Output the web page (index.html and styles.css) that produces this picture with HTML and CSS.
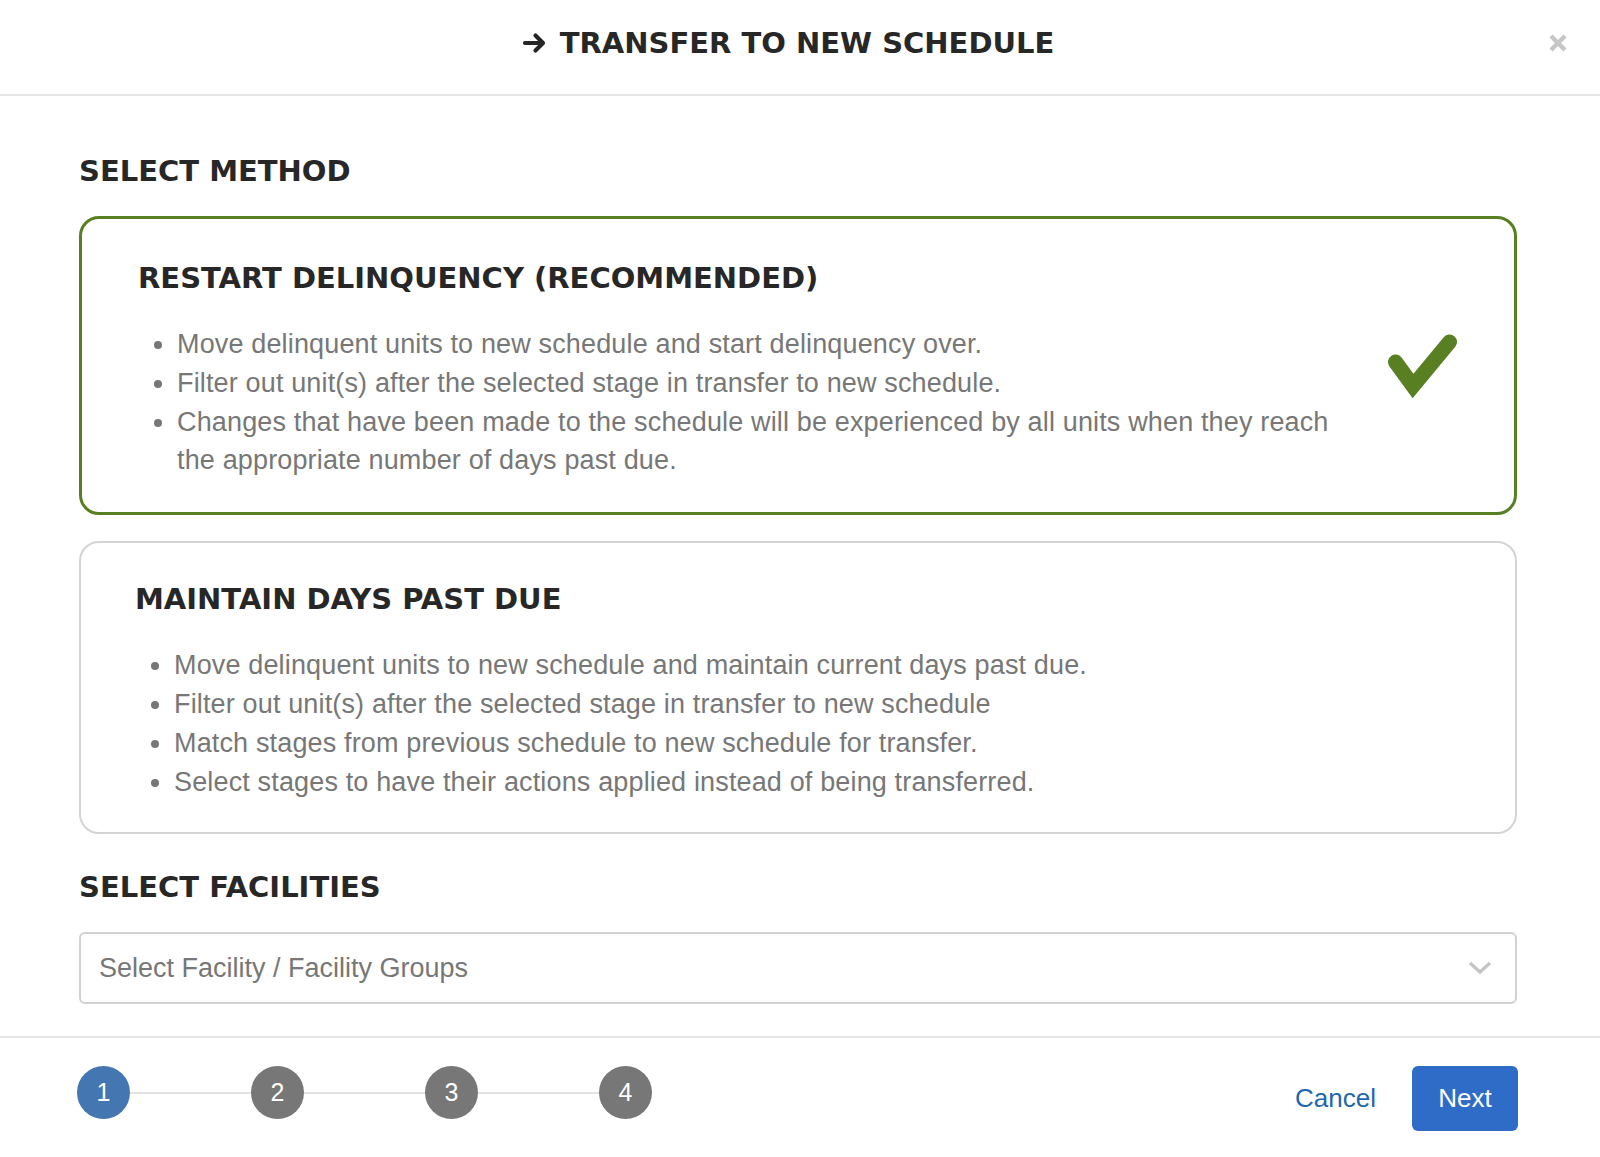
FILE: index.html
```html
<!DOCTYPE html>
<html>
<head>
<meta charset="utf-8">
<link rel="stylesheet" href="styles.css">
</head>
<body>
<div class="modal">
  <header class="modal-header">
    <h1 class="modal-title">
      <svg class="title-arrow" width="26" height="22" viewBox="0 0 26 22"><path d="M3 11 H21 M13.5 3.5 L21 11 L13.5 18.5" fill="none" stroke="#262626" stroke-width="4.2" stroke-linecap="round" stroke-linejoin="round"/></svg>
      <span>TRANSFER TO NEW SCHEDULE</span>
    </h1>
    <button class="close-btn" aria-label="Close">
      <svg width="20" height="20" viewBox="0 0 20 20"><path d="M3 3 L17 17 M17 3 L3 17" stroke="#c6c6c6" stroke-width="4.4" stroke-linecap="butt"/></svg>
    </button>
  </header>

  <main class="modal-body">
    <h2 class="section-title">SELECT METHOD</h2>

    <div class="method-card selected">
      <div class="method-content">
        <h3 class="method-title">RESTART DELINQUENCY (RECOMMENDED)</h3>
        <ul class="method-list">
          <li>Move delinquent units to new schedule and start delinquency over.</li>
          <li>Filter out unit(s) after the selected stage in transfer to new schedule.</li>
          <li>Changes that have been made to the schedule will be experienced by all units when they reach the appropriate number of days past due.</li>
        </ul>
      </div>
      <svg class="check" width="75" height="70" viewBox="0 0 75 70"><polyline points="10.5,30 28,54 64.5,10" fill="none" stroke="#587f22" stroke-width="15" stroke-linecap="round" stroke-linejoin="miter"/></svg>
    </div>

    <div class="method-card plain">
      <div class="method-content">
        <h3 class="method-title">MAINTAIN DAYS PAST DUE</h3>
        <ul class="method-list">
          <li>Move delinquent units to new schedule and maintain current days past due.</li>
          <li>Filter out unit(s) after the selected stage in transfer to new schedule</li>
          <li>Match stages from previous schedule to new schedule for transfer.</li>
          <li>Select stages to have their actions applied instead of being transferred.</li>
        </ul>
      </div>
    </div>

    <h2 class="section-title facilities">SELECT FACILITIES</h2>

    <div class="select-box">
      <span class="placeholder">Select Facility / Facility Groups</span>
      <svg class="chevron" width="26" height="16" viewBox="0 0 26 16"><path d="M3 3 L13 12 L23 3" fill="none" stroke="#c4c4c4" stroke-width="3.2"/></svg>
    </div>
  </main>

  <footer class="modal-footer">
    <div class="steps">
      <span class="step active">1</span>
      <span class="step-line"></span>
      <span class="step">2</span>
      <span class="step-line"></span>
      <span class="step">3</span>
      <span class="step-line"></span>
      <span class="step">4</span>
    </div>
    <div class="actions">
      <button class="btn-link">Cancel</button>
      <button class="btn-primary">Next</button>
    </div>
  </footer>
</div>
</body>
</html>
```

FILE: styles.css
```css
* { box-sizing: border-box; }
html, body { margin: 0; padding: 0; background: #fff; }
body { font-family: "Liberation Sans", Arial, sans-serif; }

.modal {
  width: 1600px;
  height: 1157px;
  display: flex;
  flex-direction: column;
  background: #fff;
}

.modal-header {
  height: 96px;
  border-bottom: 2px solid #e6e6e6;
  display: flex;
  align-items: center;
  justify-content: center;
  position: relative;
  flex-shrink: 0;
}
.modal-title {
  margin: 0;
  display: flex;
  align-items: center;
  gap: 12px;
  font-family: "DejaVu Sans", sans-serif;
  font-weight: 700;
  font-size: 29px;
  color: #272727;
  padding-right: 24px;
  padding-bottom: 8px;
}
.close-btn {
  position: absolute;
  right: 32px;
  top: 33px;
  border: 0;
  background: none;
  padding: 0;
  width: 20px;
  height: 20px;
}
.close-btn svg { display: block; }

.modal-body {
  padding: 0 83px 0 79px;
  flex: 1;
}

.section-title {
  margin: 57px 0 0 0;
  font-family: "DejaVu Sans", sans-serif;
  font-weight: 700;
  font-size: 29px;
  line-height: 36px;
  color: #272727;
}

.method-card {
  display: flex;
  align-items: center;
}
.method-card.selected {
  margin-top: 27px;
  border: 3px solid #587f22;
  border-radius: 20px;
  padding: 40px 54px 32px 56px;
}
.method-card.plain {
  margin-top: 26px;
  border: 2px solid #d4d4d4;
  border-radius: 20px;
  padding: 37px 0 31px 54px;
}

.method-content { flex: 1; padding-right: 48px; }

.method-title {
  margin: 0;
  font-family: "DejaVu Sans", sans-serif;
  font-weight: 700;
  font-size: 29px;
  line-height: 38px;
  color: #272727;
}

.method-list {
  margin: 28px 0 0 0;
  padding-left: 39px;
  font-size: 27px;
  letter-spacing: 0.15px;
  line-height: 38.8px;
  color: #777;
}
.plain .method-list { margin-top: 28px; }

.check { flex-shrink: 0; display: block; margin-bottom: 6px; }

.section-title.facilities { margin-top: 35px; }

.select-box {
  margin-top: 27px;
  height: 72px;
  border: 2px solid #d2d2d2;
  border-radius: 6px;
  display: flex;
  align-items: center;
  justify-content: space-between;
  padding: 0 22px 0 18px;
}
.placeholder { font-size: 27px; color: #777; }
.chevron { display: block; }

.modal-footer {
  height: 121px;
  border-top: 2px solid #e6e6e6;
  display: flex;
  align-items: center;
  justify-content: space-between;
  padding: 0 82px 10px 77px;
  flex-shrink: 0;
}
.steps { display: flex; align-items: center; }
.step {
  width: 53px;
  height: 53px;
  border-radius: 50%;
  background: #777;
  color: #fff;
  font-size: 25px;
  display: flex;
  align-items: center;
  justify-content: center;
}
.step.active { background: #4477b1; }
.step-line {
  width: 121px;
  height: 2px;
  background: #e2e2e2;
}
.actions { display: flex; align-items: center; gap: 36px; padding-top: 12px; }
.btn-link {
  border: 0;
  background: none;
  padding: 0;
  font-family: "Liberation Sans", Arial, sans-serif;
  font-size: 26px;
  color: #1f68ac;
}
.btn-primary {
  border: 0;
  width: 106px;
  height: 65px;
  border-radius: 6px;
  background: #2f6cc7;
  color: #fff;
  font-family: "Liberation Sans", Arial, sans-serif;
  font-size: 26px;
}
```
